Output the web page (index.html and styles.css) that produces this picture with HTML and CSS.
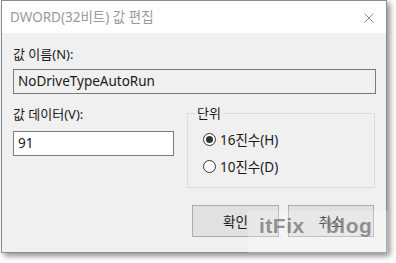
FILE: index.html
```html
<!DOCTYPE html>
<html lang="ko">
<head>
  <meta charset="UTF-8">
  <title>DWORD(32비트) 값 편집</title>
  <link rel="stylesheet" href="styles.css">
</head>
<body>
  <div class="dialog">
    <div class="titlebar">
      <span class="title">DWORD(32비트) 값 편집</span>
      <svg class="close" viewBox="0 0 10 10" width="10" height="10">
        <path d="M0.5 0.5L9.5 9.5M9.5 0.5L0.5 9.5" stroke="#8a8a8a" stroke-width="1" fill="none"/>
      </svg>
    </div>

    <div class="content">
      <label class="label">값 이름(N):</label>
      <div class="field field-name">NoDriveTypeAutoRun</div>

      <div class="row">
        <div class="data-col">
          <label class="label">값 데이터(V):</label>
          <div class="field field-data">91</div>
        </div>

        <fieldset class="group">
          <legend>단위</legend>
          <div class="radio-row">
            <span class="radio checked"></span>
            <span>16진수(H)</span>
          </div>
          <div class="radio-row">
            <span class="radio"></span>
            <span>10진수(D)</span>
          </div>
        </fieldset>
      </div>

      <div class="buttons">
        <button class="btn btn-ok">확인</button>
        <button class="btn">취소</button>
      </div>
    </div>

    <div class="watermark">itFix blog</div>
  </div>
</body>
</html>
```

FILE: styles.css
```css
* {
  margin: 0;
  padding: 0;
  box-sizing: border-box;
}

body {
  width: 396px;
  height: 263px;
  background: #ffffff;
  font-family: "Noto Sans", "Noto Sans CJK KR", sans-serif;
  font-size: 13px;
  color: #1a1a1a;
  padding-left: 1px;
  overflow: hidden;
}

.dialog {
  position: relative;
  width: 386px;
  height: 253px;
  border: 1px solid #8c8c8c;
  background: #f0f0f0;
  box-shadow: 3px 3px 6px rgba(0, 0, 0, 0.45);
}

.titlebar {
  height: 32px;
  background: #ffffff;
  display: flex;
  align-items: center;
  justify-content: space-between;
  padding: 0 12px 0 8px;
}

.title {
  color: #9a9a9a;
  font-size: 13.5px;
  line-height: 16px;
}

.close {
  display: block;
  margin-top: 2px;
}

.content {
  padding: 13px 10px 0 11px;
}

.label {
  display: block;
  line-height: 16px;
  height: 16px;
}

.field {
  height: 25px;
  border: 1px solid #7a7a7a;
  padding: 0 4px;
  line-height: 23px;
  font-size: 13.5px;
}

.field-name {
  margin-top: 7px;
  background: #f0f0f0;
}

.row {
  display: flex;
  gap: 13px;
  margin-top: 12px;
}

.data-col {
  width: 161px;
}

.field-data {
  margin-top: 9px;
  background: #ffffff;
}

.group {
  width: 188px;
  height: 83px;
  margin-top: -1px;
  border: 1px solid #dcdcdc;
  padding: 10px 0 0 15px;
}

.group legend {
  margin-left: -8px;
  padding: 0 2px;
  line-height: 16px;
}

.radio-row {
  display: flex;
  align-items: center;
  gap: 4px;
  height: 16px;
  margin-bottom: 11px;
  font-size: 13.5px;
}

.radio {
  width: 13px;
  height: 13px;
  border: 1px solid #333333;
  border-radius: 50%;
  background: #ffffff;
  display: flex;
  align-items: center;
  justify-content: center;
}

.radio.checked::after {
  content: "";
  width: 7px;
  height: 7px;
  border-radius: 50%;
  background: #333333;
}

.buttons {
  display: flex;
  justify-content: flex-end;
  gap: 9px;
  margin-top: 17px;
  padding-right: 2px;
}

.btn {
  width: 86px;
  height: 32px;
  border: 1px solid #adadad;
  background: #e1e1e1;
  font-family: inherit;
  font-size: 13.5px;
  color: #1a1a1a;
}

.btn-ok {
  width: 87px;
}

.watermark {
  position: absolute;
  left: 246px;
  top: 210px;
  width: 140px;
  height: 42px;
  padding-left: 11px;
  background: rgba(255, 255, 255, 0.25);
  font-family: "Liberation Sans", sans-serif;
  font-weight: bold;
  font-size: 21px;
  letter-spacing: 0.5px;
  word-spacing: 15px;
  line-height: 30px;
  color: rgba(120, 120, 120, 0.8);
}
```
